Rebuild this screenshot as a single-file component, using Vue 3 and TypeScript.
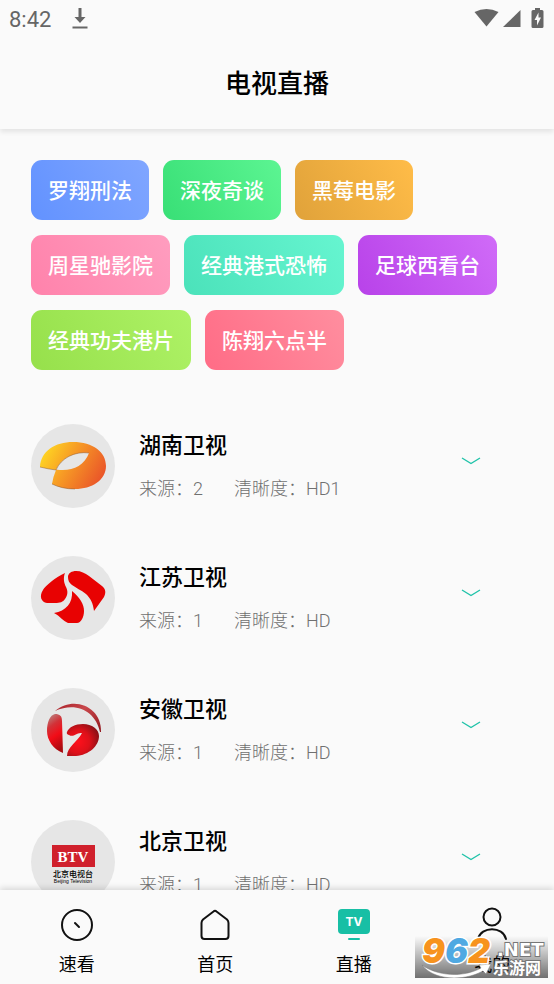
<script setup lang="ts">
import { ref } from 'vue'

type LogoKind = 'hunan' | 'jiangsu' | 'anhui' | 'beijing'
type TabKind = 'quick' | 'home' | 'live' | 'mine'

interface Channel {
  name: string
  sources: number
  quality: string
  logo: LogoKind
}

const categories: { label: string; tone: string }[] = [
  { label: '罗翔刑法', tone: 'blue' },
  { label: '深夜奇谈', tone: 'green' },
  { label: '黑莓电影', tone: 'amber' },
  { label: '周星驰影院', tone: 'pink' },
  { label: '经典港式恐怖', tone: 'mint' },
  { label: '足球西看台', tone: 'purple' },
  { label: '经典功夫港片', tone: 'lime' },
  { label: '陈翔六点半', tone: 'coral' },
]

const channels: Channel[] = [
  { name: '湖南卫视', sources: 2, quality: 'HD1', logo: 'hunan' },
  { name: '江苏卫视', sources: 1, quality: 'HD', logo: 'jiangsu' },
  { name: '安徽卫视', sources: 1, quality: 'HD', logo: 'anhui' },
  { name: '北京卫视', sources: 1, quality: 'HD', logo: 'beijing' },
]

const tabs: { id: TabKind; label: string }[] = [
  { id: 'quick', label: '速看' },
  { id: 'home', label: '首页' },
  { id: 'live', label: '直播' },
  { id: 'mine', label: '我的' },
]

const current = ref<TabKind>('live')
</script>

<template>
  <div class="app">
    <header class="top">
      <div class="status">
        <span class="clock">8:42</span>
        <svg class="download" width="16" height="22" viewBox="0 0 16 22">
          <path d="M6.5 0h3v9h4L8 15 2.500 9h4zM0.500 18.500h15v2h-15z" />
        </svg>
        <svg class="signals" width="72" height="22" viewBox="0 0 72 22">
          <path d="M2.500 4Q14.500 -2 26.500 4L14.500 18.500z" />
          <path d="M48.500 2v17H31z" />
          <path d="M63 2V0h5v2h2q1.500 0 1.500 1.500V18.500q0 1.500-1.500 1.500h-9q-1.500 0-1.500-1.500V3.500q0-1.500 1.500-1.500z" />
          <path class="bolt" d="M66.500 4.500l-4 7.500h2.500v5.500l4-8h-2.500z" />
        </svg>
      </div>
      <h1>电视直播</h1>
    </header>

    <main>
      <div class="chips">
        <button v-for="c in categories" :key="c.label" type="button" class="chip" :class="c.tone">{{ c.label }}</button>
      </div>

      <ul class="channels">
        <li v-for="ch in channels" :key="ch.name" class="channel">
          <svg class="logo" viewBox="0 0 84 84" aria-hidden="true">
            <circle cx="42" cy="42" r="42" fill="#e6e6e6" />
            <template v-if="ch.logo === 'hunan'">
              <defs>
                <linearGradient id="hunan-fill" x1="0" y1="0.2" x2="1" y2="0.6">
                  <stop offset="0" stop-color="#ffdc22" />
                  <stop offset="0.45" stop-color="#f79c25" />
                  <stop offset="1" stop-color="#ea5629" />
                </linearGradient>
              </defs>
              <path
                fill="url(#hunan-fill)"
                d="M9 43C10 27 24 18 42 18C62 18 75 28 75 42C75 56 61 65 44 65C35 65 27 63 21 60Q22 53 25 46Q17 45 9 43ZM25 45.500C39 48 53 43 58 29C44 27 30 34 25 45.500Z"
                fill-rule="evenodd"
              />
              <path
                fill="none"
                stroke="#8c5a34"
                stroke-width="0.5"
                d="M9 43Q17 45 25 46C30 34 44 27 58 29M21 60C27 63 35 65 44 65"
              />
            </template>
            <template v-else-if="ch.logo === 'jiangsu'">
              <g fill="#e80202">
                <path d="M34 17C32 22 33 27 35 31C37 35 37 39 34 43C32 46 29 47 24 47H16C10 46 8 40 12 34C14 30 25 21 34 17Z" />
                <path d="M37 21C37 17 41 15 45 15C50 15 54 17 58 20L71 30C75 33 75 37 73 41L63 55C62 47 60 43 55 38C50 34 45 32 41 29C38 27 37 24 37 21Z" />
                <path d="M41 35C49 42 53 48 53 55C53 61 50 67 46 67H37C32 65 29 60 23 57C35 55 42 47 41 35Z" />
              </g>
            </template>
            <template v-else-if="ch.logo === 'anhui'">
              <defs>
                <linearGradient id="anhui-left" x1="0.2" y1="0" x2="0.5" y2="1">
                  <stop offset="0" stop-color="#b98482" />
                  <stop offset="0.3" stop-color="#d23238" />
                  <stop offset="0.6" stop-color="#f20c17" />
                  <stop offset="1" stop-color="#a90b10" />
                </linearGradient>
                <radialGradient id="anhui-right" cx="0.35" cy="0.55" r="0.65">
                  <stop offset="0" stop-color="#ff101c" />
                  <stop offset="0.55" stop-color="#de1019" />
                  <stop offset="1" stop-color="#8f1117" />
                </radialGradient>
                <linearGradient id="anhui-arc" x1="0" y1="0" x2="1" y2="1">
                  <stop offset="0" stop-color="#a72028" />
                  <stop offset="0.4" stop-color="#c9484c" />
                  <stop offset="1" stop-color="#8f141a" />
                </linearGradient>
              </defs>
              <path fill="url(#anhui-arc)" d="M24 23C43 7 71 19 70 44H69C65 24 46 13 24 23Z" />
              <path fill="url(#anhui-left)" d="M24 26C29 26 31 28 31 33L32 65C22 61 16 52 16 43C16 34 19 27 24 26Z" />
              <path fill="url(#anhui-right)" d="M36 44C38 39 44 36 52 36C61 36 68 41 68 48C68 58 58 67 45 68H36C36 59 47 53 51 45C45 44 43 50 38 47Q35 46 36 44Z" />
            </template>
            <template v-else>
              <rect x="21" y="25" width="43" height="22" fill="#d0202c" />
              <text class="btv" x="42" y="42">BTV</text>
              <text class="btv-cn" x="42" y="57">北京电视台</text>
              <text class="btv-en" x="42" y="63">Beijing Television</text>
            </template>
          </svg>

          <div class="info">
            <h2>{{ ch.name }}</h2>
            <p><span>来源：{{ ch.sources }}</span><span>清晰度：{{ ch.quality }}</span></p>
          </div>

          <button type="button" class="expand" :aria-label="ch.name">
            <svg width="20" height="8" viewBox="0 0 20 8"><path d="M1 1l9 5.500L19 1" /></svg>
          </button>
        </li>
      </ul>
    </main>

    <nav class="tabs">
      <a v-for="t in tabs" :key="t.id" :href="'#' + t.id" class="tab" :aria-current="current === t.id ? 'page' : undefined" @click="current = t.id">
        <svg width="36" height="36" viewBox="0 0 36 36" aria-hidden="true">
          <g v-if="t.id === 'quick'" class="line">
            <circle cx="18" cy="18" r="15" />
            <path d="M16 16l4 4" />
          </g>
          <path v-else-if="t.id === 'home'" class="line" d="M16.500 4.500Q18 3 19.500 4.500L30 12.500Q31.500 14 31.500 16V29Q31.500 32 28.500 32H7.500Q4.500 32 4.500 29V16Q4.500 14 6 12.500Z" />
          <g v-else-if="t.id === 'live'">
            <rect x="2" y="2" width="32" height="25" rx="4" fill="#18bfa5" />
            <rect x="12" y="31" width="12" height="2" rx="1" fill="#18bfa5" />
            <text class="tv" x="18" y="19">TV</text>
          </g>
          <g v-else class="line">
            <circle cx="18" cy="10" r="8.500" />
            <path d="M4 32C7 19 29 19 32 32" />
          </g>
        </svg>
        <span>{{ t.label }}</span>
      </a>

      <svg class="stamp" width="133" height="42" viewBox="0 0 133 42">
        <defs>
          <linearGradient id="stamp-bg" x1="0" y1="0" x2="0" y2="1">
            <stop offset="0" stop-color="#000" stop-opacity="0" />
            <stop offset="1" stop-color="#000" stop-opacity="0.55" />
          </linearGradient>
        </defs>
        <rect width="133" height="42" fill="url(#stamp-bg)" />
        <path d="M7 29C22 40 48 42 66 32L64 29L76 28L71 38L68 35C48 46 18 44 7 29Z" fill="#fff" stroke="#777" stroke-width="0.500" />
        <text class="digits" x="7" y="27"><tspan fill="#f7931e">9</tspan><tspan fill="#4fa9e2">6</tspan><tspan fill="#f7931e">2</tspan></text>
        <text class="net" x="82" y="20">.NET</text>
        <text class="site" x="78" y="38">乐游网</text>
      </svg>
    </nav>
  </div>
</template>

<style>
body {
  margin: 0;
  background: #fafafa;
}
</style>

<style scoped>
.app {
  display: flex;
  flex-direction: column;
  height: 100vh;
  overflow: hidden;
  background: #fafafa;
  color: #000;
  font-family: Roboto, "Noto Sans CJK SC", sans-serif;
}

button {
  border: 0;
  font-family: inherit;
  cursor: pointer;
}

.top {
  flex: none;
  padding-bottom: 25px;
  box-shadow: 0 3px 5px rgba(0, 0, 0, 0.09);
  z-index: 1;
}

.status {
  display: flex;
  align-items: center;
  gap: 21px;
  height: 38px;
  padding: 0 10px 0 9px;
  color: #666;
  fill: #666;
}

.clock {
  font-size: 22px;
}

.signals {
  margin-left: auto;
}

.bolt {
  fill: #fafafa;
}

h1,
h2,
p,
ul {
  margin: 0;
  padding: 0;
}

h1 {
  padding-top: 26px;
  font-size: 26px;
  font-weight: 500;
  line-height: 40px;
  text-align: center;
}

main {
  flex: 1;
  min-height: 0;
  overflow-y: auto;
  padding: 31px 31px 0;
  scrollbar-width: none;
}

.chips {
  display: flex;
  flex-wrap: wrap;
  gap: 15px 14px;
}

.chip {
  height: 60px;
  padding: 0 17px 2px;
  border-radius: 11px;
  color: #fff;
  font-size: 21px;
  font-weight: 500;
}

.blue { background: linear-gradient(60deg, #6292ff, #80a6ff); }
.green { background: linear-gradient(60deg, #38df76, #5cf592); }
.amber { background: linear-gradient(60deg, #e0a23a, #ffbc48); }
.pink { background: linear-gradient(60deg, #ff82ab, #ff9dbf); }
.mint { background: linear-gradient(60deg, #4be2ba, #66f5d0); }
.purple { background: linear-gradient(60deg, #b842e9, #d06bf8); }
.lime { background: linear-gradient(60deg, #96e04b, #aef266); }
.coral { background: linear-gradient(60deg, #ff6c86, #ff8e9f); }

.channels {
  display: flex;
  flex-direction: column;
  gap: 48px;
  padding-top: 54px;
  list-style: none;
}

.channel {
  display: flex;
  align-items: center;
  gap: 24px;
  height: 84px;
}

.logo {
  flex: none;
  width: 84px;
  height: 84px;
}

.btv,
.btv-cn,
.btv-en {
  text-anchor: middle;
}

.btv {
  fill: #fff;
  font: bold 15px "Liberation Serif", serif;
}

.btv-cn {
  font-size: 8px;
  font-weight: 500;
}

.btv-en {
  font: 5px "Liberation Sans", sans-serif;
}

.info {
  flex: 1;
}

h2 {
  padding-top: 4px;
  font-size: 22px;
  font-weight: 500;
  line-height: 42px;
}

p {
  display: flex;
  gap: 31px;
  color: #707070;
  font-size: 18px;
  font-weight: 300;
  line-height: 44px;
}

.expand {
  display: flex;
  margin-right: 34px;
  padding: 0 8px 10px;
  background: none;
}

.expand path {
  fill: none;
  stroke: #20c3a9;
  stroke-width: 1.4;
}

.tabs {
  position: relative;
  flex: none;
  display: flex;
  height: 94px;
  background: #fafafa;
  box-shadow: 0 -2px 6px rgba(0, 0, 0, 0.14);
}

.tab {
  flex: 1;
  display: flex;
  flex-direction: column;
  align-items: center;
  gap: 8px;
  padding: 17px 0 0 15px;
  color: #000;
  font-size: 18px;
  line-height: 28px;
  text-decoration: none;
}

.line {
  fill: none;
  stroke: #111;
  stroke-width: 2;
  stroke-linecap: round;
  stroke-linejoin: round;
}

.tv {
  fill: #fff;
  font: bold 12px Inter, sans-serif;
  text-anchor: middle;
}

.stamp {
  position: absolute;
  right: 6px;
  bottom: 6px;
  pointer-events: none;
}

.digits {
  font: italic 900 34px Inter, sans-serif;
  paint-order: stroke;
  stroke: #fff;
  stroke-width: 3px;
}

.net,
.site {
  fill: #fff;
  paint-order: stroke;
  stroke: #777;
  stroke-width: 2px;
}

.net {
  font: bold 18px "DejaVu Sans", sans-serif;
}

.site {
  font-size: 16px;
  font-weight: bold;
}
</style>
